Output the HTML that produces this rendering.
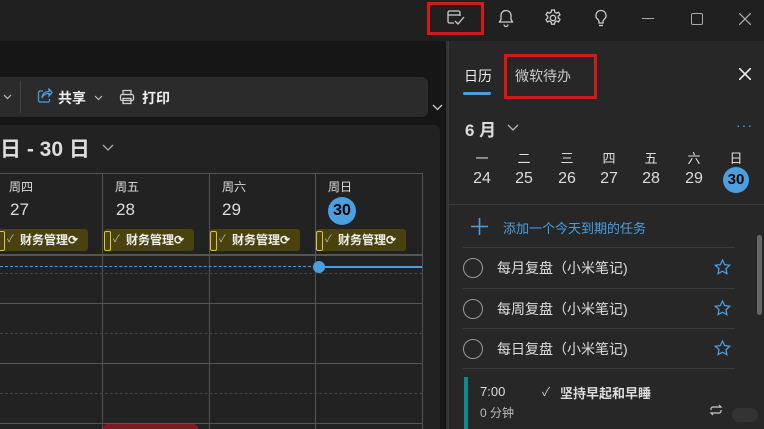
<!DOCTYPE html>
<html><head><meta charset="utf-8"><style>
*{margin:0;padding:0;box-sizing:border-box}
body{width:764px;height:429px;overflow:hidden;background:#161616;font-family:"Liberation Sans","Noto Sans CJK SC",sans-serif;color:#e6e6e6;position:relative}
.a{position:absolute}
.tb{left:0;top:0;width:764px;height:41px;background:#202020}
.ic{position:absolute;top:8px}
.tool{left:0;top:77px;width:428px;height:40px;background:#2b2b2b;border-radius:0 6px 6px 0}
.card{left:0;top:125px;width:440px;height:304px;background:#222;border-radius:0 6px 0 0}
.vl{position:absolute;width:1px;background:#555;top:173px;height:256px}
.hl{position:absolute;height:1px;background:#555;left:0;width:422px}
.dl{position:absolute;height:0;border-top:1px dashed #444;left:0;width:422px}
.dn{position:absolute;font-size:12px;color:#ddd}
.dd{position:absolute;font-size:17px;color:#ddd}
.ev{position:absolute;top:229px;height:22px;width:90px;background:#4a420e;border-radius:3px;font-size:12px;font-weight:bold;color:#eee;line-height:22px;padding-left:22px;white-space:nowrap}
.ev:before{content:"";position:absolute;left:0;top:2px;width:5px;height:18px;border:1px solid #d9c92a;border-radius:2px}
.ev i{position:absolute;left:9px;font-style:normal;font-weight:normal;font-size:10px;color:#bbb}
.rp{left:448px;top:41px;width:316px;height:388px;background:#272727;border-left:1px solid #3a3a3a}
.wk{position:absolute;top:148px;font-size:13px;color:#ddd;width:30px;text-align:center}
.wd{position:absolute;top:170px;font-size:16px;color:#ddd;width:30px;text-align:center}
.task{position:absolute;left:463px;width:272px;height:40px;border-top:1px solid #3c3c3c}
.task .c{position:absolute;left:0;top:10px;width:20px;height:20px;border:1.5px solid #999;border-radius:50%}
.task .t{position:absolute;left:34px;top:10px;font-size:14px;color:#ddd}
.task svg{position:absolute;left:251px;top:11px}
.red{position:absolute;border:3px solid #d21a1a}
</style></head><body>
<div class="a tb"></div>
<svg class="ic" style="left:446px" width="20" height="20" viewBox="0 0 20 20" fill="none" stroke="#ccc" stroke-width="1.3"><path d="M14 8V4.5A1.5 1.5 0 0 0 12.5 3h-9A1.5 1.5 0 0 0 2 4.5v9A1.5 1.5 0 0 0 3.5 15H8"/><path d="M2 7h12"/><path d="M9 13l3 3 6-7"/></svg>
<svg class="ic" style="left:496px" width="20" height="20" viewBox="0 0 20 20" fill="none" stroke="#ccc" stroke-width="1.3"><path d="M10 2.5a5 5 0 0 0-5 5v4L3.5 14h13L15 11.5v-4a5 5 0 0 0-5-5z"/><path d="M8 16.5a2 2 0 0 0 4 0"/></svg>
<svg class="ic" style="left:543px" width="20" height="20" viewBox="0 0 20 20" fill="none" stroke="#ccc" stroke-width="1.3"><circle cx="10" cy="10" r="2.7"/><path d="M8.6 2h2.8l.5 2.2 1.6.9 2.1-.8 1.4 2.4-1.7 1.5v1.8l1.7 1.5-1.4 2.4-2.1-.8-1.6.9-.5 2.2H8.6l-.5-2.2-1.6-.9-2.1.8-1.4-2.4 1.7-1.5V8.2L3 6.7l1.4-2.4 2.1.8 1.6-.9z"/></svg>
<svg class="ic" style="left:591px" width="20" height="20" viewBox="0 0 20 20" fill="none" stroke="#ccc" stroke-width="1.3"><path d="M10 2.5a5 5 0 0 0-3 9c.7.6 1 1.3 1 2V15h4v-1.5c0-.7.3-1.4 1-2a5 5 0 0 0-3-9z"/><path d="M8 17.5h4"/></svg>
<div class="a" style="left:642px;top:18px;width:12px;height:1px;background:#aaa"></div>
<div class="a" style="left:691px;top:13px;width:12px;height:12px;border:1.3px solid #aaa;border-radius:2px"></div>
<svg class="a" style="left:739px;top:13px" width="12" height="12" stroke="#aaa" stroke-width="1.3"><path d="M0 0L12 12M12 0L0 12"/></svg>
<div class="red" style="left:427px;top:2px;width:57px;height:33px"></div>

<div class="a tool"></div>
<svg class="a" style="left:3px;top:94px" width="9" height="6" fill="none" stroke="#bbb" stroke-width="1.2"><path d="M1 1l3.5 3.5L8 1"/></svg>
<div class="a" style="left:20px;top:81px;width:1px;height:32px;background:#444"></div>
<svg class="a" style="left:37px;top:88px" width="16" height="16" viewBox="0 0 16 16" fill="none" stroke="#4a9fe0" stroke-width="1.3"><path d="M6 3H3a1.5 1.5 0 0 0-1.5 1.5v8A1.5 1.5 0 0 0 3 14h8a1.5 1.5 0 0 0 1.5-1.5V11"/><path d="M5 10c1-3 4-4.5 7-4.5V8l3-3.5L12 1v2.5C8 3.5 5 6 5 10z"/></svg>
<div class="a" style="left:58px;top:88px;font-size:14px;font-weight:bold;color:#eee">共享</div>
<svg class="a" style="left:94px;top:95px" width="9" height="6" fill="none" stroke="#bbb" stroke-width="1.2"><path d="M1 1l3.5 3.5L8 1"/></svg>
<svg class="a" style="left:119px;top:89px" width="16" height="16" viewBox="0 0 16 16" fill="none" stroke="#ccc" stroke-width="1.3"><rect x="4" y="1.5" width="8" height="4"/><rect x="1.5" y="5.5" width="13" height="6" rx="1.5"/><rect x="4" y="9.5" width="8" height="5"/></svg>
<div class="a" style="left:142px;top:88px;font-size:14px;font-weight:bold;color:#eee">打印</div>
<svg class="a" style="left:432px;top:104px" width="11" height="7" fill="none" stroke="#ccc" stroke-width="1.3"><path d="M1 1l4.5 4.5L10 1"/></svg>
<div class="a" style="left:446px;top:41px;width:2px;height:388px;background:#333"></div>

<div class="a card"></div>
<div class="a" style="left:0;top:133px;font-size:21px;font-weight:bold;color:#ddd">日 - 30 日</div>
<svg class="a" style="left:102px;top:144px" width="12" height="7" fill="none" stroke="#aaa" stroke-width="1.3"><path d="M1 1l5 5 5-5"/></svg>
<div class="a" style="left:0;top:173px;width:422px;height:1px;background:#555"></div>
<div class="vl" style="left:102px"></div><div class="vl" style="left:209px"></div><div class="vl" style="left:315px"></div><div class="vl" style="left:422px"></div>
<div class="hl" style="top:254px;height:2px"></div>
<div class="hl" style="top:303px"></div><div class="hl" style="top:363px"></div><div class="hl" style="top:423px"></div>
<div class="dl" style="top:273px"></div><div class="dl" style="top:333px"></div><div class="dl" style="top:393px"></div>
<div class="a" style="left:0;top:266px;width:316px;border-top:1px dashed #4a9fe0"></div>
<div class="a" style="left:316px;top:266px;width:106px;height:2px;background:#4a9fe0"></div>
<div class="a" style="left:313px;top:261px;width:12px;height:12px;border-radius:50%;background:#4a9fe0"></div>
<div class="dn" style="left:9px;top:178px">周四</div><div class="dd" style="left:10px;top:200px">27</div>
<div class="dn" style="left:115px;top:178px">周五</div><div class="dd" style="left:116px;top:200px">28</div>
<div class="dn" style="left:222px;top:178px">周六</div><div class="dd" style="left:222px;top:200px">29</div>
<div class="dn" style="left:328px;top:178px">周日</div>
<div class="a" style="left:328px;top:197px;width:28px;height:28px;border-radius:50%;background:#4a9fe0;color:#000;font-size:16px;font-weight:bold;text-align:center;line-height:28px">30</div>
<div class="ev" style="left:-2px"><i>✓</i>财务管理⟳</div>
<div class="ev" style="left:104px"><i>✓</i>财务管理⟳</div>
<div class="ev" style="left:210px"><i>✓</i>财务管理⟳</div>
<div class="ev" style="left:316px"><i>✓</i>财务管理⟳</div>
<div class="a" style="left:103px;top:424px;width:95px;height:5px;background:#7a1d22;border-radius:4px 4px 0 0"></div>

<div class="a rp"></div>
<div class="a" style="left:464px;top:66px;font-size:14px;color:#eee">日历</div>
<div class="a" style="left:463px;top:92px;width:28px;height:3px;background:#4a9fe0;border-radius:2px"></div>
<div class="a" style="left:515px;top:66px;font-size:14px;color:#ccc">微软待办</div>
<div class="red" style="left:504px;top:54px;width:93px;height:45px"></div>
<svg class="a" style="left:739px;top:68px" width="12" height="12" stroke="#eee" stroke-width="1.6"><path d="M0 0L12 12M12 0L0 12"/></svg>
<div class="a" style="left:465px;top:116px;font-size:17px;font-weight:bold;color:#ddd">6 月</div>
<svg class="a" style="left:507px;top:124px" width="12" height="7" fill="none" stroke="#bbb" stroke-width="1.3"><path d="M1 1l5 5 5-5"/></svg>
<div class="a" style="left:736px;top:117px;font-size:14px;color:#4a9fe0;letter-spacing:1px">···</div>
<div class="wk" style="left:467px">一</div><div class="wk" style="left:509px">二</div><div class="wk" style="left:552px">三</div><div class="wk" style="left:594px">四</div><div class="wk" style="left:636px">五</div><div class="wk" style="left:679px">六</div><div class="wk" style="left:721px">日</div>
<div class="wd" style="left:467px">24</div><div class="wd" style="left:509px">25</div><div class="wd" style="left:552px">26</div><div class="wd" style="left:594px">27</div><div class="wd" style="left:636px">28</div><div class="wd" style="left:679px">29</div>
<div class="a" style="left:723px;top:167px;width:26px;height:26px;border-radius:50%;background:#4a9fe0;color:#000;font-size:15px;font-weight:bold;text-align:center;line-height:26px">30</div>
<div class="a" style="left:449px;top:204px;width:315px;height:1px;background:#3c3c3c"></div>
<svg class="a" style="left:471px;top:218px" width="17" height="17" stroke="#4a9fe0" stroke-width="1.6"><path d="M8.5 0v17M0 8.5h17"/></svg>
<div class="a" style="left:503px;top:218px;font-size:13px;color:#4a9fe0">添加一个今天到期的任务</div>
<div class="task" style="top:247px"><div class="c"></div><div class="t">每月复盘（小米笔记)</div><svg width="17" height="16" viewBox="0 0 24 23" fill="none" stroke="#4a9fe0" stroke-width="1.8"><path d="M12 1.5l3.1 6.6 7.2.9-5.3 5 1.4 7.1L12 17.6l-6.4 3.5L7 14 1.7 9l7.2-.9z"/></svg></div>
<div class="task" style="top:288px"><div class="c"></div><div class="t">每周复盘（小米笔记)</div><svg width="17" height="16" viewBox="0 0 24 23" fill="none" stroke="#4a9fe0" stroke-width="1.8"><path d="M12 1.5l3.1 6.6 7.2.9-5.3 5 1.4 7.1L12 17.6l-6.4 3.5L7 14 1.7 9l7.2-.9z"/></svg></div>
<div class="task" style="top:328px"><div class="c"></div><div class="t">每日复盘（小米笔记)</div><svg width="17" height="16" viewBox="0 0 24 23" fill="none" stroke="#4a9fe0" stroke-width="1.8"><path d="M12 1.5l3.1 6.6 7.2.9-5.3 5 1.4 7.1L12 17.6l-6.4 3.5L7 14 1.7 9l7.2-.9z"/></svg></div>
<div class="a" style="left:463px;top:368px;width:272px;height:1px;background:#3c3c3c"></div>
<div class="a" style="left:464px;top:377px;width:4px;height:52px;background:#0f8a8a"></div>
<div class="a" style="left:480px;top:384px;font-size:13px;color:#ddd">7:00</div>
<div class="a" style="left:542px;top:383px;font-size:12px;color:#ccc">✓</div>
<div class="a" style="left:560px;top:383px;font-size:13px;font-weight:bold;color:#ddd">坚持早起和早睡</div>
<div class="a" style="left:480px;top:404px;font-size:12px;color:#bbb">0 分钟</div>
<svg class="a" style="left:709px;top:404px" width="14" height="12" viewBox="0 0 14 12" fill="none" stroke="#ccc" stroke-width="1.2"><path d="M2 6V5a2 2 0 0 1 2-2h8l-2-2M12 6v1a2 2 0 0 1-2 2H2l2 2"/></svg>
<div class="a" style="left:732px;top:408px;width:26px;height:14px;border-radius:7px;background:#333"></div>
<div class="a" style="left:757px;top:235px;width:5px;height:80px;border-radius:3px;background:#666"></div>
</body></html>
